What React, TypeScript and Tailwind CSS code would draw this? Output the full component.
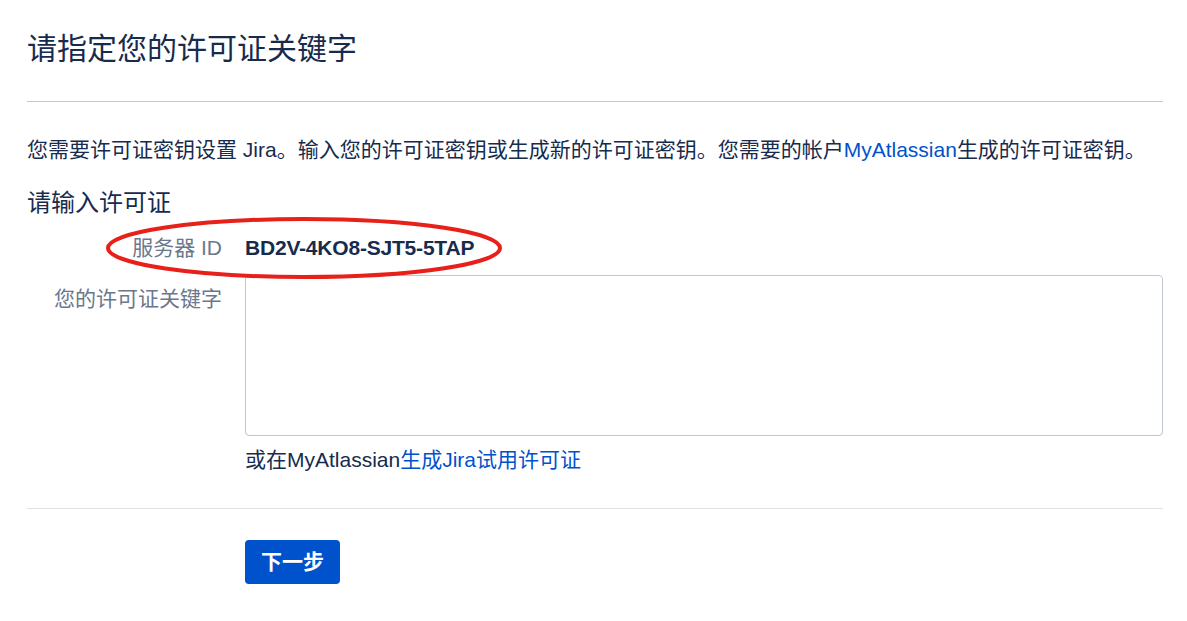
export default function App() {
  return (
    <div
      className="min-h-screen bg-white text-[#172b4d] px-[27px] pr-[24px]"
      style={{ fontFamily: '"Liberation Sans", "Noto Sans CJK SC", sans-serif' }}
    >
      <div className="pt-[26px] pb-[30px] border-b border-[#c1c7d0]">
        <h1 className="text-[30px] leading-[45px] font-normal">请指定您的许可证关键字</h1>
      </div>

      <p className="mt-[33px] text-[21px] leading-[30px]">
        您需要许可证密钥设置 Jira。输入您的许可证密钥或生成新的许可证密钥。您需要的帐户
        <a className="text-[#0052cc]">MyAtlassian</a>生成的许可证密钥。
      </p>

      <h2 className="mt-[20px] text-[24px] leading-[36px] font-normal">请输入许可证</h2>

      <div className="pb-[33px] border-b border-[#dfe1e6]">
        <div className="relative mt-[12px] flex items-center h-[30px]">
          <span className="w-[195px] text-right text-[21px] text-[#6b778c]">服务器 ID</span>
          <span className="ml-[23px] text-[21px] font-bold tracking-[-0.2px]">BD2V-4KO8-SJT5-5TAP</span>
          <svg
            className="absolute left-[78px] top-[-17px] pointer-events-none"
            width="400"
            height="64"
            viewBox="0 0 400 64"
          >
            <ellipse cx="199" cy="32" rx="196" ry="29" fill="none" stroke="#e8201a" strokeWidth="4" />
          </svg>
        </div>

        <div className="mt-[12px] flex">
          <label className="w-[195px] pt-[9px] text-right text-[21px] leading-[30px] text-[#6b778c]">
            您的许可证关键字
          </label>
          <div className="ml-[23px] flex-1">
            <textarea className="block w-full h-[161px] border border-[#c1c7d0] rounded-[4px] resize-none outline-none" />
            <div className="mt-[9px] text-[21px] leading-[30px]">
              或在MyAtlassian<a className="text-[#0052cc]">生成Jira试用许可证</a>
            </div>
          </div>
        </div>
      </div>

      <div className="mt-[31px] pl-[218px]">
        <button className="w-[95px] h-[44px] bg-[#0052cc] text-white text-[21px] font-bold rounded-[4px]">
          下一步
        </button>
      </div>
    </div>
  );
}
